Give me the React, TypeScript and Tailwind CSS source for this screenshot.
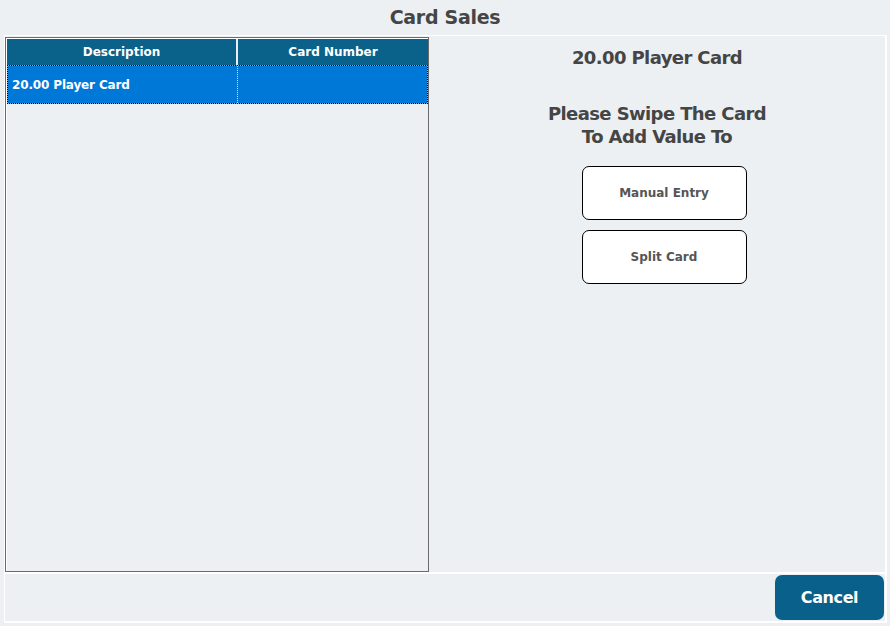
import React from 'react';

const font = { fontFamily: '"DejaVu Sans", Verdana, sans-serif' };

const App: React.FC = () => {
  return (
    <div
      className="w-[890px] h-[626px] bg-[#ecf0f3] flex flex-col text-[#454545]"
      style={font}
    >
      {/* titulo */}
      <div className="h-[35px] flex items-center justify-center pb-[1px]">
        <h1 className="text-[19px] font-bold tracking-[-0.3px]">Card Sales</h1>
      </div>

      <div className="flex-1 ml-[4px] mr-[3px] mb-[3px] border-t border-l border-r-2 border-b-2 border-white flex flex-col">
        <div className="flex-1 flex">
          {/* tabla */}
          <div className="w-[424px] mt-[1px] border border-[#6b6b6b] flex flex-col">
            <div className="flex-1 border border-white border-b-0 border-r-0 flex flex-col">
              <div className="h-[26px] flex bg-[#0a6189] text-white text-[12px] font-bold">
                <div className="w-[229px] flex items-center justify-center">
                  Description
                </div>
                <div className="w-[2px] bg-[#e8eef2]" />
                <div className="flex-1 flex items-center justify-center">
                  Card Number
                </div>
              </div>
              <div className="h-[39px] border border-dotted border-black bg-[#e0913a]">
                <div className="h-full flex bg-[#0078d7] text-white text-[12px] font-bold tracking-[-0.15px]">
                  <div className="w-[229px] flex items-center pl-[4px]">
                    20.00 Player Card
                  </div>
                  <div className="w-0 border-l border-dotted border-[#cfe3f5]" />
                  <div className="flex-1" />
                </div>
              </div>
              <div className="flex-1" />
            </div>
          </div>

          {/* panel derecho */}
          <div className="flex-1 flex flex-col items-center pt-[10px]">
            <div className="text-[18px] font-bold leading-[23px] tracking-[-0.6px]">
              20.00 Player Card
            </div>
            <div className="mt-[33px] text-[18px] font-bold leading-[23px] text-center tracking-[-0.6px]">
              <div>Please Swipe The Card</div>
              <div>To Add Value To</div>
            </div>
            <div className="mt-[18px] ml-[14px] flex flex-col gap-[10px]">
              <button className="w-[165px] h-[54px] bg-white border border-black rounded-[7px] text-[12px] font-bold text-[#555]">
                Manual Entry
              </button>
              <button className="w-[165px] h-[54px] bg-white border border-black rounded-[7px] text-[12px] font-bold text-[#555]">
                Split Card
              </button>
            </div>
          </div>
        </div>

        <div className="h-[2px] bg-white" />

        <div className="h-[47px] flex justify-end items-start pt-[1px] pr-[1px]">
          <button className="w-[109px] h-[45px] bg-[#09618b] rounded-[7px] text-white text-[16px] font-bold tracking-[-0.4px]">
            Cancel
          </button>
        </div>
      </div>
    </div>
  );
};

export default App;
